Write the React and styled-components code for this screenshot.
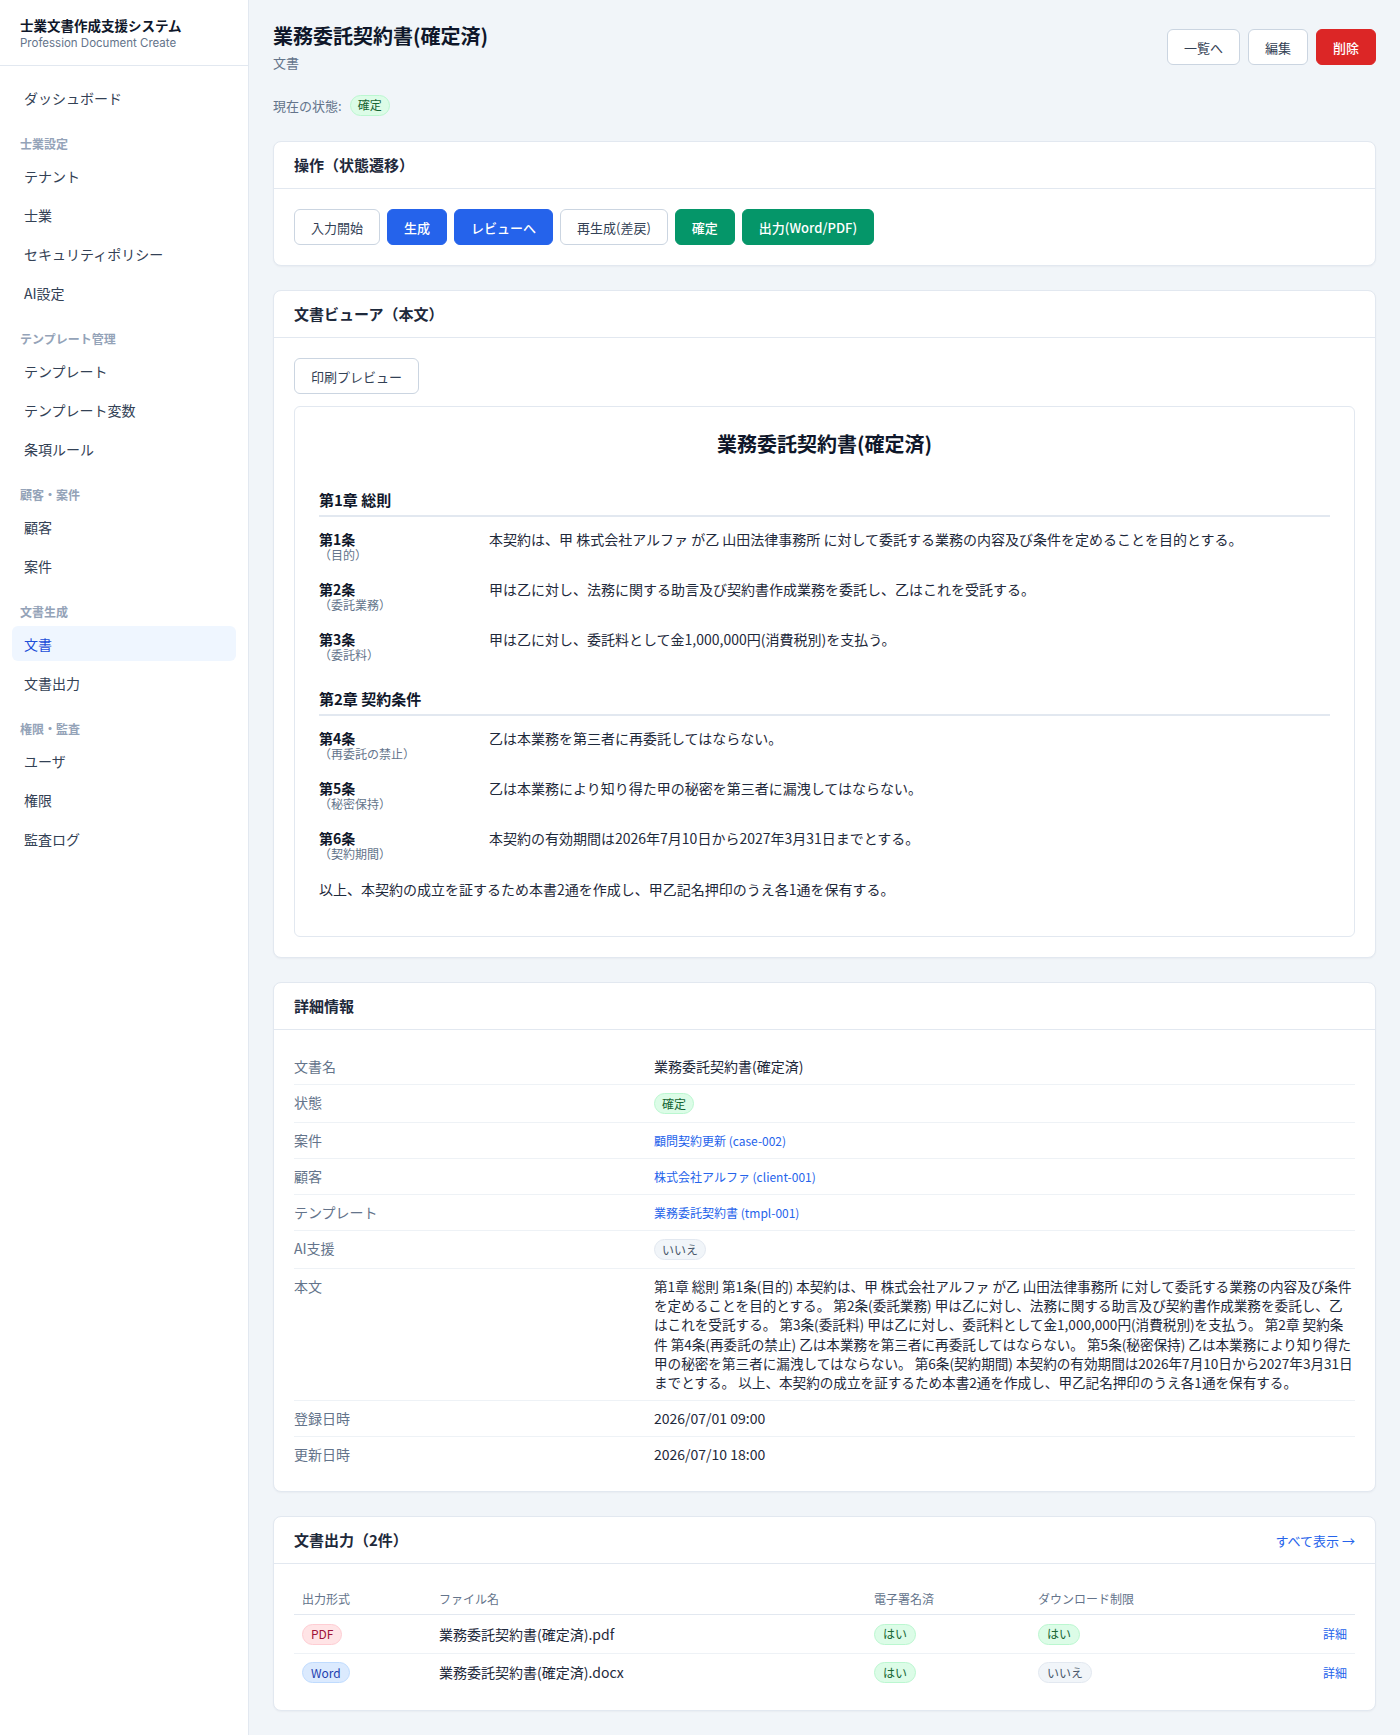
import React from 'react';
import styled, { createGlobalStyle, css } from 'styled-components';

const GlobalStyle = createGlobalStyle`
  * { box-sizing: border-box; }
  html, body { margin: 0; padding: 0; }
  body {
    font-family: "Noto Sans CJK JP", "Noto Sans", sans-serif;
    color: #1e293b;
    background: #f1f5f9;
    -webkit-font-smoothing: antialiased;
  }
`;

const Layout = styled.div`
  display: flex;
  min-height: 1735px;
`;

const Sidebar = styled.aside`
  width: 249px;
  flex-shrink: 0;
  background: #ffffff;
  border-right: 1px solid #e2e8f0;
`;

const Brand = styled.div`
  padding: 15px 20px 14px;
  border-bottom: 1px solid #e2e8f0;
`;

const BrandTitle = styled.div`
  font-size: 13.5px;
  font-weight: 700;
  line-height: 20px;
  color: #0f172a;
`;

const BrandSub = styled.div`
  font-family: Inter, "Noto Sans", sans-serif;
  font-size: 11.5px;
  line-height: 16px;
  color: #64748b;
`;

const Nav = styled.nav`
  display: flex;
  flex-direction: column;
  padding: 14px 12px;
`;

const NavItem = styled.a`
  display: flex;
  align-items: center;
  height: 35px;
  padding: 0 12px;
  margin-bottom: 4px;
  border-radius: 6px;
  font-size: 14px;
  text-decoration: none;
  color: ${p => (p.$active ? '#1d4ed8' : '#334155')};
  background: ${p => (p.$active ? '#eff6ff' : 'transparent')};
`;

const NavLabel = styled.div`
  padding: 0 8px;
  margin: 16px 0 6px;
  font-size: 12px;
  font-weight: 600;
  line-height: 17px;
  color: #94a3b8;
`;

const Main = styled.main`
  flex: 1;
  min-width: 0;
  padding: 22px 24px 24px;
`;

const PageHeader = styled.header`
  display: flex;
  align-items: center;
  justify-content: space-between;
`;

const PageTitle = styled.h1`
  margin: 0;
  font-size: 20px;
  font-weight: 700;
  line-height: 28px;
  color: #0f172a;
`;

const PageSub = styled.div`
  margin-top: 4px;
  font-size: 13px;
  line-height: 18px;
  color: #64748b;
`;

const Actions = styled.div`
  display: flex;
  gap: 8px;
`;

const buttonVariants = {
  outline: css`
    background: #ffffff;
    border-color: #cbd5e1;
    color: #334155;
    font-weight: 400;
  `,
  primary: css`
    background: #2563eb;
    border-color: #2563eb;
    color: #ffffff;
  `,
  success: css`
    background: #059669;
    border-color: #059669;
    color: #ffffff;
  `,
  danger: css`
    background: #dc2626;
    border-color: #dc2626;
    color: #ffffff;
  `,
};

const Button = styled.button`
  height: 36px;
  padding: 0 16px;
  border: 1px solid;
  border-radius: 6px;
  font-family: inherit;
  font-size: 13px;
  font-weight: 500;
  cursor: pointer;
  white-space: nowrap;
  ${p => buttonVariants[p.$variant || 'outline']}
`;

const StatusRow = styled.div`
  display: flex;
  align-items: center;
  gap: 8px;
  height: 24px;
  margin: 21px 0 24px;
  font-size: 13px;
  color: #64748b;
`;

const badgeTones = {
  green: css`
    background: #dcfce7;
    border-color: #bbf7d0;
    color: #166534;
  `,
  gray: css`
    background: #f1f5f9;
    border-color: #e2e8f0;
    color: #475569;
  `,
  rose: css`
    background: #ffe4e6;
    border-color: #fecdd3;
    color: #9f1239;
  `,
  blue: css`
    background: #dbeafe;
    border-color: #bfdbfe;
    color: #1e40af;
  `,
};

const Badge = styled.span`
  display: inline-flex;
  align-items: center;
  height: 21px;
  padding: 0 ${p => (p.$wide ? '8px' : '7px')};
  border: 1px solid;
  border-radius: 999px;
  font-size: 12px;
  line-height: 1;
  ${p => badgeTones[p.$tone || 'gray']}
`;

const Stack = styled.div`
  display: flex;
  flex-direction: column;
  gap: 24px;
`;

const Card = styled.section`
  background: #ffffff;
  border: 1px solid #e2e8f0;
  border-radius: 8px;
  box-shadow: 0 1px 2px rgba(15, 23, 42, 0.04);
`;

const CardHeader = styled.div`
  display: flex;
  align-items: center;
  justify-content: space-between;
  padding: 12px 20px;
  border-bottom: 1px solid #e2e8f0;
`;

const CardTitle = styled.h2`
  margin: 0;
  font-size: 15px;
  font-weight: 700;
  line-height: 22px;
  color: #1e293b;
`;

const HeaderLink = styled.a`
  font-size: 13px;
  color: #2563eb;
  text-decoration: none;
`;

const CardBody = styled.div`
  padding: ${p => (p.$tight ? '19px 20px' : '20px')};
`;

const ButtonRow = styled.div`
  display: flex;
  flex-wrap: wrap;
  gap: 7px;
`;

const DocPaper = styled.article`
  margin-top: 12px;
  padding: 23px 24px 24px;
  border: 1px solid #e2e8f0;
  border-radius: 6px;
  background: #ffffff;
`;

const DocTitle = styled.h1`
  margin: 0 0 32px;
  text-align: center;
  font-size: 20px;
  font-weight: 700;
  line-height: 28px;
  color: #0f172a;
`;

const Chapter = styled.section`
  margin-top: 27px;
`;

const ChapterTitle = styled.h2`
  margin: 0 0 13px;
  padding-bottom: 5px;
  border-bottom: 2px solid #e2e8f0;
  font-size: 15px;
  font-weight: 700;
  line-height: 20px;
  color: #0f172a;
`;

const ArticleRow = styled.div`
  display: grid;
  grid-template-columns: 170px 1fr;
  margin-bottom: 18px;
`;

const ArticleNo = styled.div`
  font-size: 14px;
  font-weight: 700;
  line-height: 18px;
  color: #0f172a;
`;

const ArticleCaption = styled.div`
  font-size: 12px;
  line-height: 14px;
  color: #64748b;
`;

const ArticleText = styled.p`
  margin: 0;
  font-size: 14px;
  line-height: 18px;
  color: #1e293b;
`;

const Closing = styled.p`
  margin: 0 0 13px;
  font-size: 14px;
  line-height: 20px;
  color: #1e293b;
`;

const DetailList = styled.dl`
  margin: 0;
`;

const DetailRow = styled.div`
  display: grid;
  grid-template-columns: 360px 1fr;
  align-items: start;
  padding: 8px 0;
  border-bottom: 1px solid #eef2f6;
  &:last-child {
    border-bottom: none;
  }
`;

const DetailLabel = styled.dt`
  font-size: 14px;
  line-height: 19px;
  color: #64748b;
`;

const DetailValue = styled.dd`
  margin: 0;
  display: flex;
  align-items: center;
  min-height: 19px;
  font-size: 14px;
  line-height: 19px;
  color: #1e293b;
`;

const LongText = styled.dd`
  margin: 0;
  font-size: 13.6px;
  line-height: 19.2px;
  color: #1e293b;
`;

const TextLink = styled.a`
  font-size: 12px;
  color: #2563eb;
  text-decoration: none;
`;

const Table = styled.table`
  width: 100%;
  border-collapse: collapse;
`;

const Th = styled.th`
  width: ${p => p.$w || 'auto'};
  padding: 8px;
  border-bottom: 1px solid #e2e8f0;
  text-align: left;
  font-size: 12px;
  font-weight: 400;
  line-height: 15px;
  color: #64748b;
`;

const Tr = styled.tr`
  & + & td {
    border-top: 1px solid #eef2f6;
  }
`;

const Td = styled.td`
  padding: 8px;
  font-size: 14px;
  line-height: 20px;
  color: #1e293b;
  text-align: ${p => (p.$right ? 'right' : 'left')};
  vertical-align: middle;
`;

const navGroups = [
  { items: ['ダッシュボード'] },
  { label: '士業設定', items: ['テナント', '士業', 'セキュリティポリシー', 'AI設定'] },
  { label: 'テンプレート管理', items: ['テンプレート', 'テンプレート変数', '条項ルール'] },
  { label: '顧客・案件', items: ['顧客', '案件'] },
  { label: '文書生成', items: ['文書', '文書出力'] },
  { label: '権限・監査', items: ['ユーザ', '権限', '監査ログ'] },
];

const chapters = [
  {
    title: '第1章 総則',
    articles: [
      { no: '第1条', cap: '（目的）', text: '本契約は、甲 株式会社アルファ が乙 山田法律事務所 に対して委託する業務の内容及び条件を定めることを目的とする。' },
      { no: '第2条', cap: '（委託業務）', text: '甲は乙に対し、法務に関する助言及び契約書作成業務を委託し、乙はこれを受託する。' },
      { no: '第3条', cap: '（委託料）', text: '甲は乙に対し、委託料として金1,000,000円(消費税別)を支払う。' },
    ],
  },
  {
    title: '第2章 契約条件',
    articles: [
      { no: '第4条', cap: '（再委託の禁止）', text: '乙は本業務を第三者に再委託してはならない。' },
      { no: '第5条', cap: '（秘密保持）', text: '乙は本業務により知り得た甲の秘密を第三者に漏洩してはならない。' },
      { no: '第6条', cap: '（契約期間）', text: '本契約の有効期間は2026年7月10日から2027年3月31日までとする。' },
    ],
  },
];

const closingText = '以上、本契約の成立を証するため本書2通を作成し、甲乙記名押印のうえ各1通を保有する。';

const bodyText =
  '第1章 総則 第1条(目的) 本契約は、甲 株式会社アルファ が乙 山田法律事務所 に対して委託する業務の内容及び条件を定めることを目的とする。 第2条(委託業務) 甲は乙に対し、法務に関する助言及び契約書作成業務を委託し、乙はこれを受託する。 第3条(委託料) 甲は乙に対し、委託料として金1,000,000円(消費税別)を支払う。 第2章 契約条件 第4条(再委託の禁止) 乙は本業務を第三者に再委託してはならない。 第5条(秘密保持) 乙は本業務により知り得た甲の秘密を第三者に漏洩してはならない。 第6条(契約期間) 本契約の有効期間は2026年7月10日から2027年3月31日までとする。 以上、本契約の成立を証するため本書2通を作成し、甲乙記名押印のうえ各1通を保有する。';

const outputs = [
  { fmt: 'PDF', tone: 'rose', file: '業務委託契約書(確定済).pdf', signed: true, limited: true },
  { fmt: 'Word', tone: 'blue', file: '業務委託契約書(確定済).docx', signed: true, limited: false },
];

const details = [
  { label: '文書名', value: '業務委託契約書(確定済)' },
  { label: '状態', value: <Badge $tone="green">確定</Badge> },
  { label: '案件', value: <TextLink href="#">顧問契約更新 (case-002)</TextLink> },
  { label: '顧客', value: <TextLink href="#">株式会社アルファ (client-001)</TextLink> },
  { label: 'テンプレート', value: <TextLink href="#">業務委託契約書 (tmpl-001)</TextLink> },
  { label: 'AI支援', value: <Badge $tone="gray">いいえ</Badge> },
  { label: '本文', long: true, value: bodyText },
  { label: '登録日時', value: '2026/07/01 09:00' },
  { label: '更新日時', value: '2026/07/10 18:00' },
];

const YesNo = ({ value }) =>
  value ? (
    <Badge $tone="green" $wide>はい</Badge>
  ) : (
    <Badge $tone="gray" $wide>いいえ</Badge>
  );

export default function App() {
  return (
    <>
      <GlobalStyle />
      <Layout>
        <Sidebar>
          <Brand>
            <BrandTitle>士業文書作成支援システム</BrandTitle>
            <BrandSub>Profession Document Create</BrandSub>
          </Brand>
          <Nav>
            {navGroups.map((g, i) => (
              <React.Fragment key={i}>
                {g.label && <NavLabel>{g.label}</NavLabel>}
                {g.items.map(item => (
                  <NavItem key={item} href="#" $active={item === '文書'}>
                    {item}
                  </NavItem>
                ))}
              </React.Fragment>
            ))}
          </Nav>
        </Sidebar>

        <Main>
          <PageHeader>
            <div>
              <PageTitle>業務委託契約書(確定済)</PageTitle>
              <PageSub>文書</PageSub>
            </div>
            <Actions>
              <Button $variant="outline">一覧へ</Button>
              <Button $variant="outline">編集</Button>
              <Button $variant="danger">削除</Button>
            </Actions>
          </PageHeader>

          <StatusRow>
            現在の状態:
            <Badge $tone="green">確定</Badge>
          </StatusRow>

          <Stack>
            <Card>
              <CardHeader>
                <CardTitle>操作（状態遷移）</CardTitle>
              </CardHeader>
              <CardBody>
                <ButtonRow>
                  <Button $variant="outline">入力開始</Button>
                  <Button $variant="primary">生成</Button>
                  <Button $variant="primary">レビューへ</Button>
                  <Button $variant="outline">再生成(差戻)</Button>
                  <Button $variant="success">確定</Button>
                  <Button $variant="success">出力(Word/PDF)</Button>
                </ButtonRow>
              </CardBody>
            </Card>

            <Card>
              <CardHeader>
                <CardTitle>文書ビューア（本文）</CardTitle>
              </CardHeader>
              <CardBody>
                <Button $variant="outline">印刷プレビュー</Button>
                <DocPaper>
                  <DocTitle>業務委託契約書(確定済)</DocTitle>
                  {chapters.map(ch => (
                    <Chapter key={ch.title}>
                      <ChapterTitle>{ch.title}</ChapterTitle>
                      {ch.articles.map(a => (
                        <ArticleRow key={a.no}>
                          <div>
                            <ArticleNo>{a.no}</ArticleNo>
                            <ArticleCaption>{a.cap}</ArticleCaption>
                          </div>
                          <ArticleText>{a.text}</ArticleText>
                        </ArticleRow>
                      ))}
                    </Chapter>
                  ))}
                  <Closing>{closingText}</Closing>
                </DocPaper>
              </CardBody>
            </Card>

            <Card>
              <CardHeader>
                <CardTitle>詳細情報</CardTitle>
              </CardHeader>
              <CardBody $tight>
                <DetailList>
                  {details.map(d => (
                    <DetailRow key={d.label}>
                      <DetailLabel>{d.label}</DetailLabel>
                      {d.long ? <LongText>{d.value}</LongText> : <DetailValue>{d.value}</DetailValue>}
                    </DetailRow>
                  ))}
                </DetailList>
              </CardBody>
            </Card>

            <Card>
              <CardHeader>
                <CardTitle>文書出力（2件）</CardTitle>
                <HeaderLink href="#">すべて表示 →</HeaderLink>
              </CardHeader>
              <CardBody $tight>
                <Table>
                  <thead>
                    <tr>
                      <Th $w="137px">出力形式</Th>
                      <Th $w="435px">ファイル名</Th>
                      <Th $w="164px">電子署名済</Th>
                      <Th $w="200px">ダウンロード制限</Th>
                      <Th />
                    </tr>
                  </thead>
                  <tbody>
                    {outputs.map(o => (
                      <Tr key={o.file}>
                        <Td><Badge $tone={o.tone} $wide>{o.fmt}</Badge></Td>
                        <Td>{o.file}</Td>
                        <Td><YesNo value={o.signed} /></Td>
                        <Td><YesNo value={o.limited} /></Td>
                        <Td $right><TextLink href="#">詳細</TextLink></Td>
                      </Tr>
                    ))}
                  </tbody>
                </Table>
              </CardBody>
            </Card>
          </Stack>
        </Main>
      </Layout>
    </>
  );
}
